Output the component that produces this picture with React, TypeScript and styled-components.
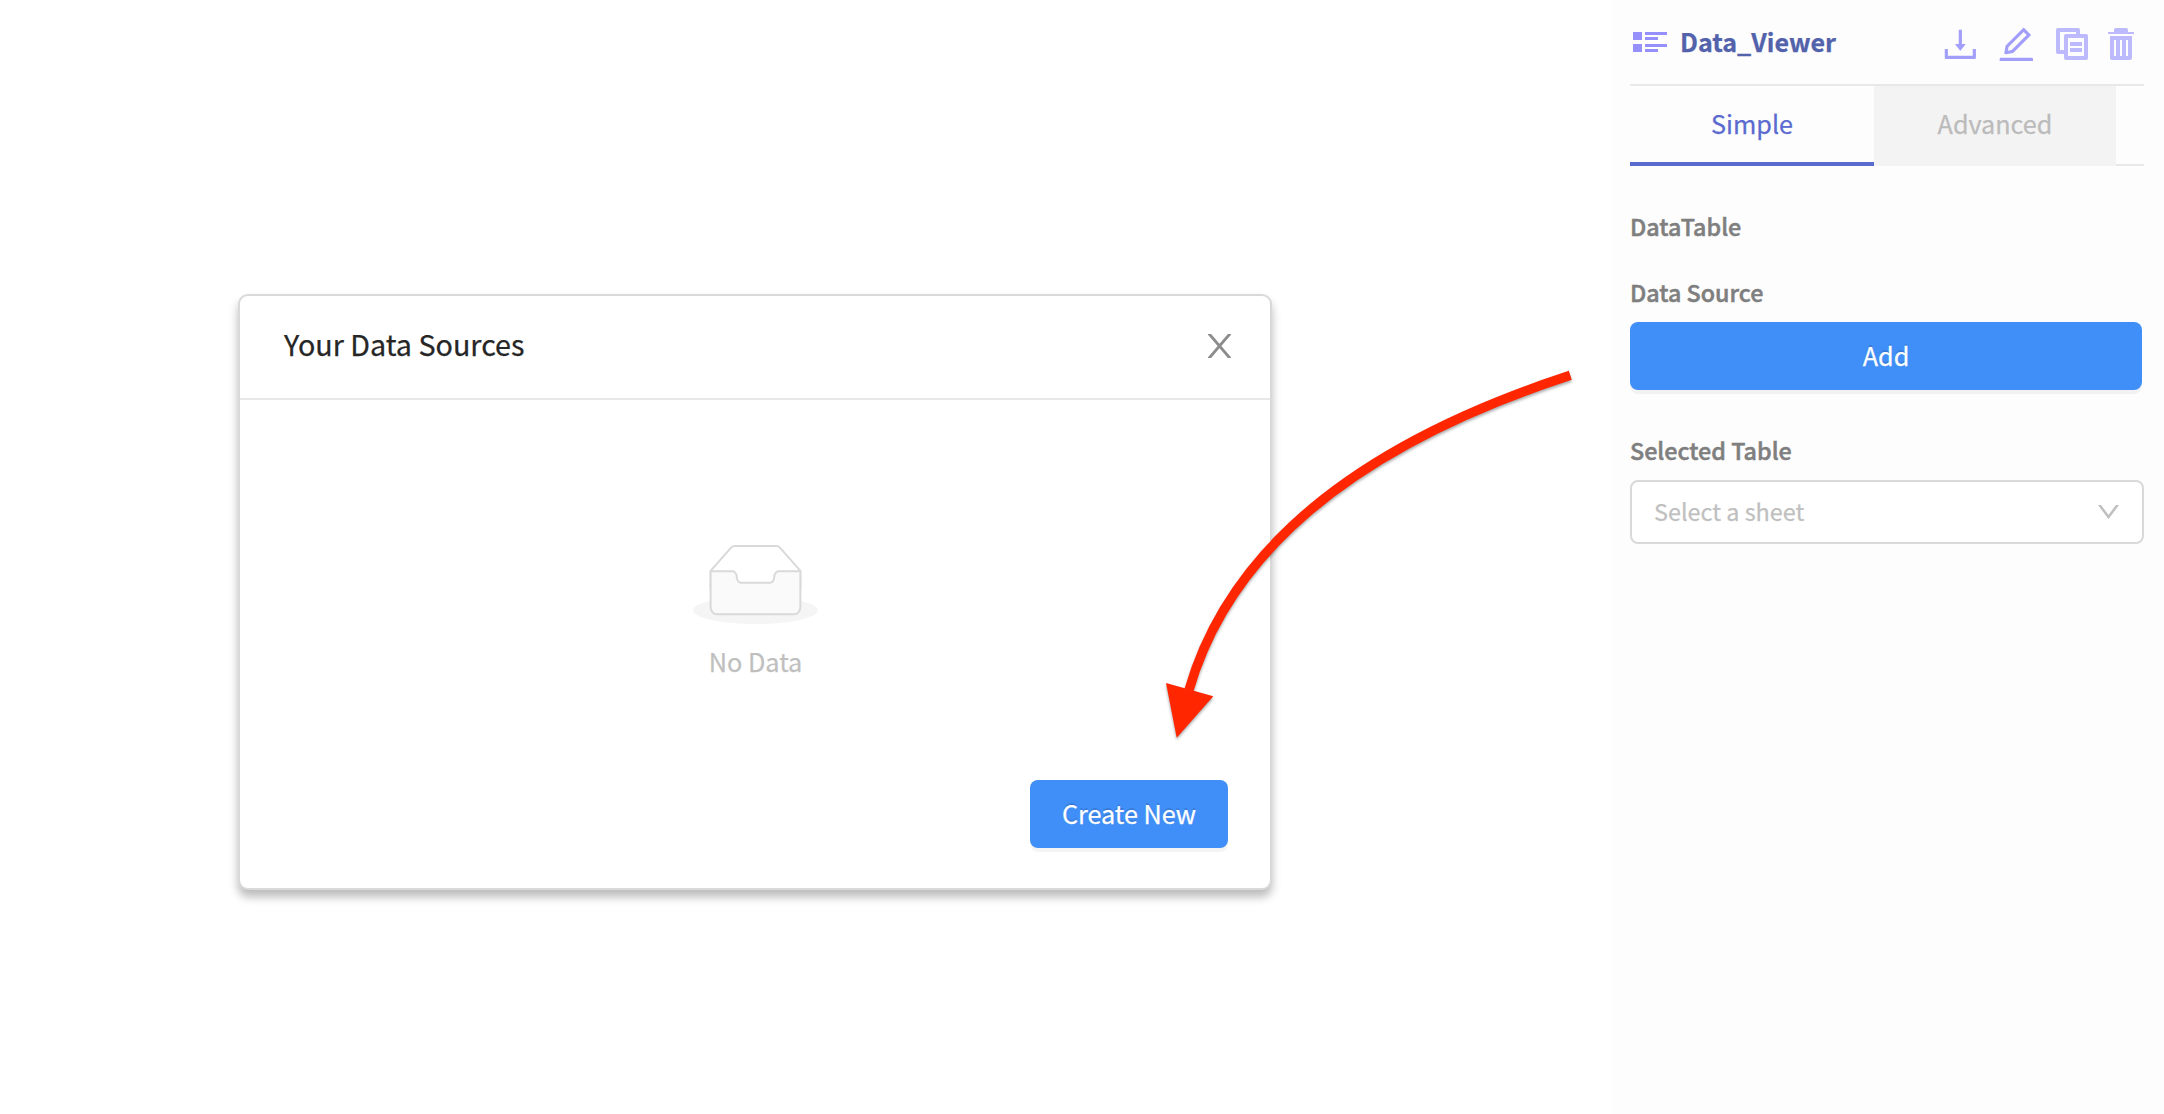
import React from "react";
import styled, { createGlobalStyle, css } from "styled-components";
import { AiOutlineDownload, AiOutlineEdit } from "react-icons/ai";

const GlobalStyle = createGlobalStyle`
  *, *::before, *::after { box-sizing: border-box; }
  body {
    margin: 0;
    background: #fff;
    font-family: "Noto Sans CJK SC", "Noto Sans", sans-serif;
    -webkit-text-stroke: 0.25px currentColor;
    overflow: hidden;
  }
`;

const Page = styled.div`
  position: relative;
  display: flex;
  width: 2164px;
  height: 1114px;
`;

const Canvas = styled.main`
  flex: 1;
  padding: 294px 0 0 238px;
`;

const Dialog = styled.section`
  display: flex;
  flex-direction: column;
  width: 1034px;
  height: 596px;
  border: 2px solid #d9d9d9;
  border-radius: 10px;
  background: #fff;
  box-shadow: 0 7px 10px rgba(0, 0, 0, 0.27);
`;

const DialogHeader = styled.header`
  display: flex;
  align-items: center;
  justify-content: space-between;
  height: 104px;
  padding: 0 39px 2px 44px;
  border-bottom: 2px solid #e8e8e8;
`;

const DialogTitle = styled.h2`
  margin: 0 0 5px;
  font-size: 28.7px;
  font-weight: 400;
  line-height: 44px;
  color: #262626;
`;

const DialogBody = styled.div`
  flex: 1;
  display: flex;
  flex-direction: column;
  align-items: center;
  padding: 144px 0 0 1px;
`;

const EmptyText = styled.p`
  margin: 18px 0 0;
  font-size: 25.3px;
  line-height: 38px;
  color: #bfbfbf;
`;

const DialogFooter = styled.footer`
  display: flex;
  justify-content: flex-end;
  padding: 0 42px 40px 0;
`;

const PrimaryButton = styled.button<{ $width: number }>`
  width: ${(p) => p.$width}px;
  height: 68px;
  padding: 0 0 2px;
  border: 0;
  border-radius: 8px;
  background: #408ef7;
  box-shadow: 0 4px 0 rgba(0, 0, 0, 0.043);
  color: #fff;
  font-family: inherit;
  font-size: 25.2px;
  line-height: 38px;
  text-shadow: 0 -2px 0 rgba(0, 0, 0, 0.12);
  -webkit-text-stroke: 0.25px currentColor;
`;

const Sidebar = styled.aside`
  width: 552px;
  padding: 0 20px 0 18px;
  background: #fdfdfd;
`;

const WidgetHeader = styled.header`
  display: flex;
  align-items: flex-start;
  height: 86px;
  border-bottom: 2px solid #e8e8e8;
`;

const WidgetName = styled.h1`
  margin: 22px 0 0 13px;
  width: 256px;
  font-size: 25.1px;
  font-weight: 700;
  line-height: 38px;
  color: #5262ab;
`;

const ListGlyph = styled.svg`
  margin: 32px 0 0 3px;
  fill: #9590fb;
`;

const Actions = styled.div`
  display: flex;
  align-items: flex-start;
  color: #a29ffa;
  margin: 23px 0 0 3px;
`;

const SoftIcon = styled.svg<{ $left: number }>`
  margin: 5px 0 0 ${(p) => p.$left}px;
  fill: #bcb9fc;
`;

const EditIcon = styled(AiOutlineEdit)`
  margin-left: 13px;
`;

const Tabs = styled.nav`
  display: flex;
  height: 80px;
`;

const Tab = styled.div<{ $active?: boolean }>`
  display: flex;
  justify-content: center;
  width: ${(p) => (p.$active ? 244 : 242)}px;
  padding-top: 18px;
  font-size: 25.2px;
  line-height: 38px;
  ${(p) =>
    p.$active
      ? css`
          color: #5a6acf;
          border-bottom: 4px solid #5a6acf;
        `
      : css`
          color: #bbb;
          background: #f3f3f3;
        `}
`;

const TabRest = styled.div`
  flex: 1;
  border-bottom: 2px solid #e8e8e8;
`;

const Label = styled.div<{ $top: number; $gap?: number }>`
  margin: ${(p) => p.$top}px 0 ${(p) => p.$gap ?? 0}px;
  font-size: 23.3px;
  font-weight: 500;
  line-height: 36px;
  color: #7f7f7f;
  -webkit-text-stroke: 0.5px currentColor;
`;

const Select = styled.div`
  display: flex;
  align-items: center;
  justify-content: space-between;
  height: 64px;
  padding: 0 23px 0 22px;
  border: 2px solid #d9d9d9;
  border-radius: 8px;
  background: #fff;
  color: #bfbfbf;
`;

const Placeholder = styled.span`
  padding-bottom: 3px;
  font-size: 23.4px;
  line-height: 38px;
`;

const ArrowLayer = styled.svg`
  position: absolute;
  left: 1150px;
  top: 360px;
  filter: drop-shadow(0 2px 1.5px rgba(0, 0, 0, 0.35));
`;

export default function App() {
  return (
    <>
      <GlobalStyle />
      <Page>
        <Canvas>
          <Dialog>
            <DialogHeader>
              <DialogTitle>Your Data Sources</DialogTitle>
              <svg width="23" height="24" viewBox="0 0 23 24" stroke="#8c8c8c" strokeWidth="2.8">
                <path d="M0 -1.5L23 25.5M23 -1.5L0 25.5" />
              </svg>
            </DialogHeader>
            <DialogBody>
              <svg width="125" height="80" viewBox="0 0 64 41">
                <g transform="translate(0 1)" fill="none" fillRule="evenodd">
                  <ellipse cx="32" cy="33" rx="32" ry="7" fill="#f5f5f5" />
                  <g stroke="#d9d9d9">
                    <path
                      fill="#fff"
                      d="M55 12.76L44.854 1.258C44.367.474 43.656 0 42.907 0H21.093c-.749 0-1.46.474-1.947 1.257L9 12.761V22h46v-9.24z"
                    />
                    <path
                      fill="#fafafa"
                      d="M41.613 15.931c0-1.605.994-2.93 2.227-2.931H55v18.137C55 33.26 53.68 35 52.05 35h-40.1C10.32 35 9 33.259 9 31.137V13h11.16c1.233 0 2.227 1.323 2.227 2.928v.022c0 1.605 1.005 2.901 2.237 2.901h14.752c1.232 0 2.237-1.308 2.237-2.913v-.007z"
                    />
                  </g>
                </g>
              </svg>
              <EmptyText>No Data</EmptyText>
            </DialogBody>
            <DialogFooter>
              <PrimaryButton $width={198}>Create New</PrimaryButton>
            </DialogFooter>
          </Dialog>
        </Canvas>

        <Sidebar>
          <WidgetHeader>
            <ListGlyph width="34" height="20">
              <path d="M0 0h9v8H0zM0 12h9v8H0zM12 0h22v3H12zM12 5h13v3H12zM12 12h22v3H12zM12 17h13v3H12z" />
            </ListGlyph>
            <WidgetName>Data_Viewer</WidgetName>
            <Actions>
              <AiOutlineDownload size={42.67} />
              <EditIcon size={42.67} />
              <SoftIcon width="32" height="32" $left={19}>
                <path
                  fillRule="evenodd"
                  d="M2 0h20q2 0 2 2v4h-4V4H4v18h4v4H2q-2 0-2-2V2q0-2 2-2zM10 6h20q2 0 2 2v22q0 2-2 2H10q-2 0-2-2V8q0-2 2-2zM12 10v18h16V10zM14 14h12v4H14zM14 20h12v4H14z"
                />
              </SoftIcon>
              <SoftIcon width="26" height="32" $left={20}>
                <path
                  fillRule="evenodd"
                  d="M0 4h6V2q0-2 2-2h10q2 0 2 2v2h6v2H0zM2 8h22v22q0 2-2 2H4q-2 0-2-2zM6 12v16h2V12zM12 12v16h2V12zM18 12v16h2V12z"
                />
              </SoftIcon>
            </Actions>
          </WidgetHeader>
          <Tabs>
            <Tab $active>Simple</Tab>
            <Tab>Advanced</Tab>
            <TabRest />
          </Tabs>
          <Label $top={42}>DataTable</Label>
          <Label $top={30} $gap={12}>Data Source</Label>
          <PrimaryButton $width={512}>Add</PrimaryButton>
          <Label $top={42} $gap={12}>Selected Table</Label>
          <Select>
            <Placeholder>Select a sheet</Placeholder>
            <svg width="21" height="14" viewBox="0 0 21 14" fill="none" stroke="#bfbfbf" strokeWidth="2.5">
              <path d="M0.6 -1.2L10.5 12L20.4 -1.2" />
            </svg>
          </Select>
        </Sidebar>

        <ArrowLayer width="430" height="390" viewBox="0 0 430 390">
          <path d="M420.3 15.3Q99.5 120 39 330" fill="none" stroke="#ff2600" strokeWidth="9.4" />
          <path d="M16 323L63.3 336.3L26.7 377.7Z" fill="#ff2600" />
        </ArrowLayer>
      </Page>
    </>
  );
}
